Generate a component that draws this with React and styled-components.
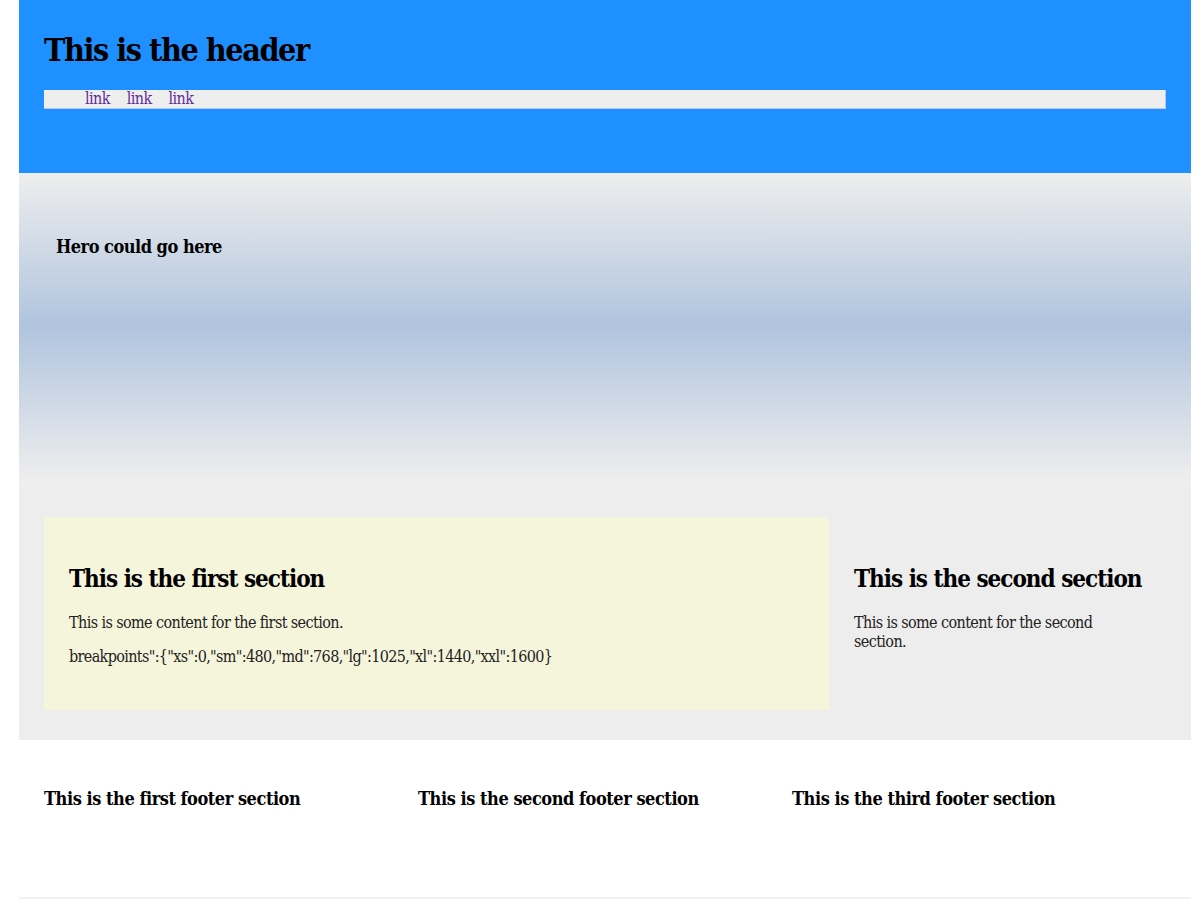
import React from 'react';
import styled, { createGlobalStyle } from 'styled-components';

const GlobalStyle = createGlobalStyle`
  body {
    margin: 0;
    background: #fff;
    font-family: "DejaVu Serif", serif;
    font-stretch: condensed;
    letter-spacing: -0.6px;
  }
`;

const Page = styled.div`
  width: 1172px;
  margin-left: 19px;
`;

const Header = styled.header`
  background: #1e90ff;
  height: 173px;
  padding: 25px 25px 0;
  box-sizing: border-box;
`;

const Title = styled.h1`
  margin: 0 0 15px;
  font-size: 32px;
  line-height: 50px;
  letter-spacing: -1.45px;
`;

const Nav = styled.nav`
  background: #eee;
  display: flex;
  gap: 17px;
  padding: 0 0 0 41px;
  height: 18px;
  border: 1px solid #b8c8f0;
  border-width: 0 1px 1px 0;
`;

const NavLink = styled.a`
  color: #5e2f9c;
  font-size: 16px;
  line-height: 18px;
  text-decoration: none;
`;

const Hero = styled.section`
  height: 317px;
  padding: 63px 37px 0;
  box-sizing: border-box;
  background: linear-gradient(#eee 0%, #b0c4de 48%, #eee 97%);
`;

const HeroText = styled.h3`
  margin: 0;
  font-size: 18px;
  letter-spacing: -0.5px;
`;

const Main = styled.main`
  background: #ededed;
  padding: 27px 25px 30px;
  display: grid;
  grid-template-columns: 785px 1fr;
  gap: 25px;
`;

const Section = styled.section`
  background: ${p => (p.$tint ? '#f5f5dc' : 'transparent')};
  padding: ${p => (p.$tint ? '25px' : '25px 0')};
  height: 193px;
  box-sizing: border-box;
`;

const SectionTitle = styled.h2`
  font-size: 24px;
  margin: 22px 0 20px;
  letter-spacing: -1px;
`;

const Text = styled.p`
  font-size: 16px;
  line-height: 19px;
  color: #222;
  margin: 0 0 15px;
  letter-spacing: ${p => (p.$code ? '-0.65px' : '-0.6px')};
  max-width: ${p => p.$narrow || 'none'};
`;

const Footer = styled.footer`
  display: grid;
  grid-template-columns: repeat(3, 1fr);
  padding: 0 25px;
  height: 157px;
  border-bottom: 2px solid #f2f2f2;
`;

const FooterTitle = styled.h4`
  font-size: 18px;
  margin: 48px 0 0;
  letter-spacing: -0.45px;
`;

export default function App() {
  return (
    <>
      <GlobalStyle />
      <Page>
        <Header>
          <Title>This is the header</Title>
          <Nav>
            <NavLink href="#">link</NavLink>
            <NavLink href="#">link</NavLink>
            <NavLink href="#">link</NavLink>
          </Nav>
        </Header>
        <Hero>
          <HeroText>Hero could go here</HeroText>
        </Hero>
        <Main>
          <Section $tint>
            <SectionTitle>This is the first section</SectionTitle>
            <Text>This is some content for the first section.</Text>
            <Text $code>breakpoints":{`{"xs":0,"sm":480,"md":768,"lg":1025,"xl":1440,"xxl":1600}`}</Text>
          </Section>
          <Section>
            <SectionTitle>This is the second section</SectionTitle>
            <Text $narrow="245px">This is some content for the second section.</Text>
          </Section>
        </Main>
        <Footer>
          <FooterTitle>This is the first footer section</FooterTitle>
          <FooterTitle>This is the second footer section</FooterTitle>
          <FooterTitle>This is the third footer section</FooterTitle>
        </Footer>
      </Page>
    </>
  );
}
